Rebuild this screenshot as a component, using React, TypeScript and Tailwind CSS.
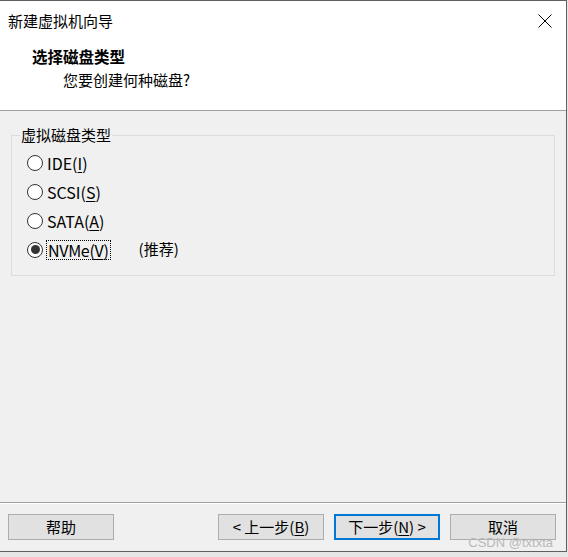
import React from "react";

const font = { fontFamily: '"Noto Sans CJK SC", "Noto Sans", sans-serif' };

function Radio({ checked, children }: { checked?: boolean; children: React.ReactNode }) {
  return (
    <div className="flex items-center h-[29px]">
      <div className="w-[16px] h-[16px] rounded-full bg-white border border-[#333333] flex items-center justify-center">
        {checked && <div className="w-[9px] h-[9px] rounded-full bg-[#333333]" />}
      </div>
      {children}
    </div>
  );
}

function Btn({ children, primary }: { children: React.ReactNode; primary?: boolean }) {
  return (
    <div
      className={`w-[106px] h-[26px] flex items-center justify-center bg-[#e1e1e1] text-[15px] text-black ${
        primary ? "border-2 border-[#0078d7]" : "border border-[#adadad]"
      }`}
    >
      {children}
    </div>
  );
}

export default function App() {
  return (
    <div className="w-[568px] h-[557px] bg-[#e6e6e6] overflow-hidden" style={font}>
      <div className="w-[567px] h-[552px] flex flex-col border-r border-b border-t border-[#5f5f5f] bg-[#f0f0f0]">
        {/* white header */}
        <div className="h-[110px] bg-white flex flex-col border-b border-[#a0a0a0]">
          <div className="h-[39px] flex items-center justify-between pl-[8px] pr-[14px]">
            <span className="text-[15px] text-black leading-none">新建虚拟机向导</span>
            <svg width="14" height="14" viewBox="0 0 14 14">
              <path d="M0.5 0.5 L13.5 13.5 M13.5 0.5 L0.5 13.5" stroke="#000" strokeWidth="1" />
            </svg>
          </div>
          <div className="pl-[32px] pt-[9px] text-[15.5px] font-bold leading-none text-black">选择磁盘类型</div>
          <div className="pl-[63px] pt-[7px] text-[15px] leading-none text-black">您要创建何种磁盘?</div>
        </div>
        {/* body */}
        <div className="flex-1 px-[10px] pt-[15px]">
          <fieldset className="border border-[#dcdcdc] h-[150px] w-[544px] ml-px p-0">
            <legend className="ml-[8px] px-[1px] text-[15px] leading-[18px] text-black">虚拟磁盘类型</legend>
            <div className="flex flex-col pl-[15px] pt-[4px] text-[16px] text-black">
              <Radio>
                <span className="ml-[4px]">IDE(<u className="underline-offset-2">I</u>)</span>
              </Radio>
              <Radio>
                <span className="ml-[4px]">SCSI(<u className="underline-offset-2">S</u>)</span>
              </Radio>
              <Radio>
                <span className="ml-[4px]">SATA(<u className="underline-offset-2">A</u>)</span>
              </Radio>
              <Radio checked>
                <span className="ml-[3px] px-px h-[20px] flex items-center border border-dotted border-black tracking-[-0.3px]">
                  NVMe(<u className="underline-offset-2">V</u>)
                </span>
                <span className="ml-[28px] text-[15px]">(推荐)</span>
              </Radio>
            </div>
          </fieldset>
        </div>
        {/* footer */}
        <div className="h-[49px] border-t border-[#a0a0a0] flex items-start pt-[11px] pl-[8px] pr-[10px] relative">
          <div className="absolute left-0 right-0 top-0 h-px bg-white" />
          <Btn>帮助</Btn>
          <div className="flex-1" />
          <div className="flex gap-[10px]">
            <Btn>
              &lt; 上一步(<u className="underline-offset-2">B</u>)
            </Btn>
            <Btn primary>
              下一步(<u className="underline-offset-2">N</u>) &gt;
            </Btn>
            <Btn>取消</Btn>
          </div>
          <div
            className="absolute right-[13px] bottom-[2px] text-[13px] text-[#b8b8b8] leading-none"
            style={{ fontFamily: '"Liberation Sans", sans-serif' }}
          >
            CSDN @txtxta
          </div>
        </div>
      </div>
    </div>
  );
}
